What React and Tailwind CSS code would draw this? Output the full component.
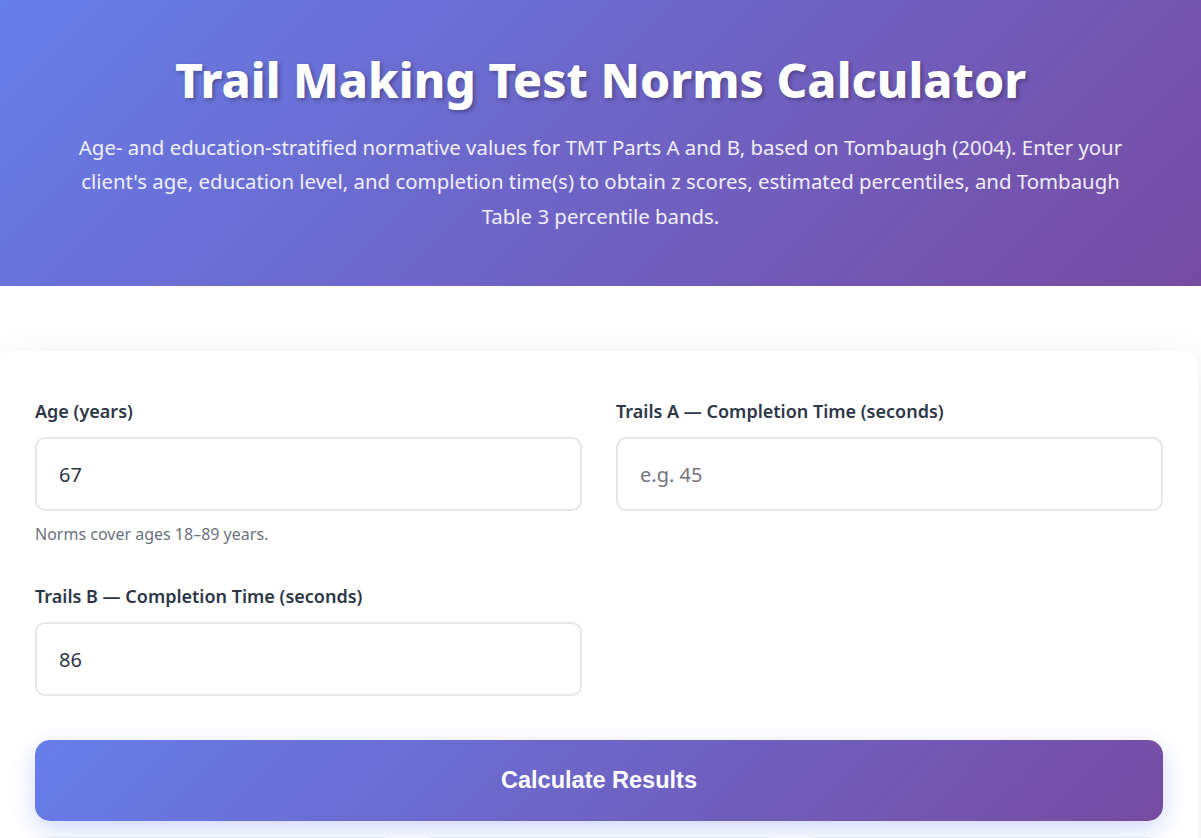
import { useState } from "react";

const Field = ({ label, value, placeholder, hint, onChange }) => (
  <div className="flex flex-col">
    <label className="mb-[14px] text-[18px] font-semibold leading-[24px] text-[#2d3748]">
      {label}
    </label>
    <input
      type="number"
      value={value}
      placeholder={placeholder}
      onChange={(e) => onChange(e.target.value)}
      className="h-[74px] w-full rounded-[10px] border-2 border-[#e5e7eb] bg-white px-[22px] text-[20px] text-[#2d3748] outline-none placeholder:text-[#75757e] focus:border-[#667eea]"
    />
    {hint && <p className="mt-[11px] text-[16px] text-[#6b7280]">{hint}</p>}
  </div>
);

export default function App() {
  const [age, setAge] = useState("67");
  const [trailsA, setTrailsA] = useState("");
  const [trailsB, setTrailsB] = useState("86");

  return (
    <div className="min-h-screen bg-[#fefefe] font-['Noto_Sans',sans-serif]">
      <header className="h-[286px] bg-[linear-gradient(135deg,#667eea_0%,#764ba2_100%)] px-5 pt-[51px] text-center text-white">
        <h1 className="text-[48px] leading-[1.2] font-extrabold [text-shadow:2px_2px_4px_rgba(0,0,0,0.3)]">
          Trail Making Test Norms Calculator
        </h1>
        <p className="mx-auto mt-[21px] max-w-[1060px] text-[20.4px] leading-[34.5px] text-white/90">
          Age- and education-stratified normative values for TMT Parts A and B, based on
          Tombaugh (2004). Enter your client's age, education level, and completion time(s)
          to obtain z scores, estimated percentiles, and Tombaugh Table 3 percentile bands.
        </p>
      </header>

      <main className="mt-[65px] w-[1198px]">
        <section className="rounded-[16px] bg-white px-[35px] pt-[48px] pb-[35px] shadow-[0_10px_40px_rgba(0,0,0,0.07)]">
          <div className="grid grid-cols-2 gap-x-[34px] gap-y-[38px]">
            <Field
              label="Age (years)"
              value={age}
              onChange={setAge}
              hint="Norms cover ages 18–89 years."
            />
            <Field
              label="Trails A — Completion Time (seconds)"
              value={trailsA}
              placeholder="e.g. 45"
              onChange={setTrailsA}
            />
            <Field
              label="Trails B — Completion Time (seconds)"
              value={trailsB}
              onChange={setTrailsB}
            />
          </div>

          <button className="mt-[44px] h-[81px] w-full rounded-[15px] bg-[linear-gradient(135deg,#667eea_0%,#764ba2_100%)] font-['Liberation_Sans',Arial,sans-serif] text-[23.5px] font-bold text-white shadow-[0_8px_25px_rgba(102,126,234,0.3)]">
            Calculate Results
          </button>

          <div className="mt-[16px] grid grid-cols-3 gap-[27px] px-[4px]">
            <div className="h-[120px] rounded-[12px] border-2 border-[#e2e8f0] bg-[#f8fafc]" />
            <div className="h-[120px] rounded-[12px] border-2 border-[#e2e8f0] bg-[#f8fafc]" />
            <div className="h-[120px] rounded-[12px] border-2 border-[#e2e8f0] bg-[#f8fafc]" />
          </div>
        </section>
      </main>
    </div>
  );
}
